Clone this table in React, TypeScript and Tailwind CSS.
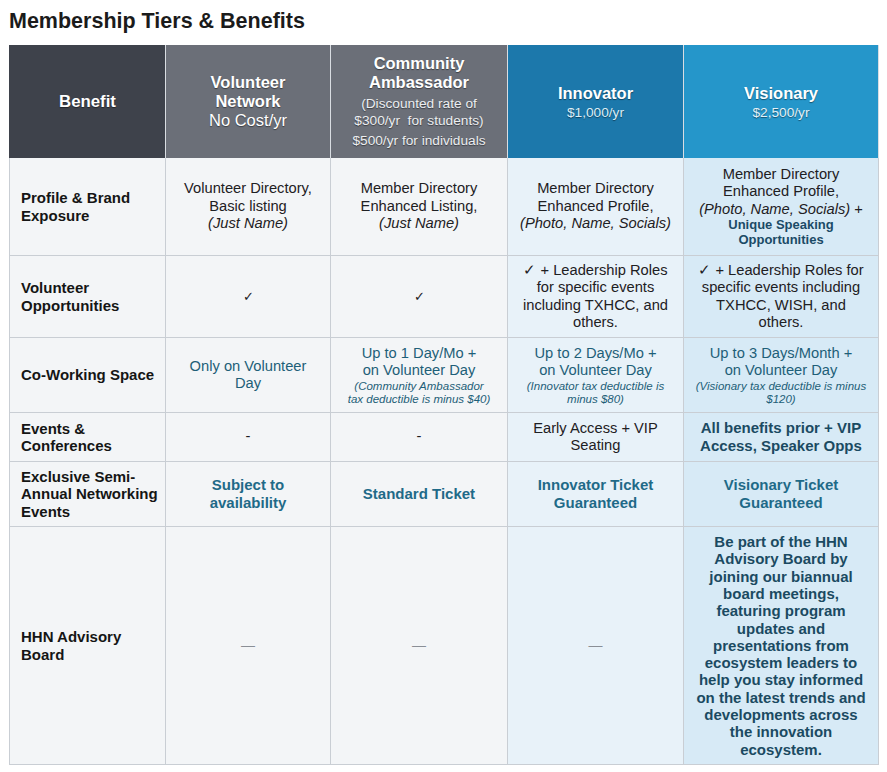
import React from 'react';

type Tone = 'gray' | 'inno' | 'vis';

const toneBg: Record<Tone, string> = {
  gray: 'bg-[#f3f5f7]',
  inno: 'bg-[#e8f2f9]',
  vis: 'bg-[#d7eaf6]',
};

function Label({ children }: { children: React.ReactNode }) {
  return (
    <div className="flex items-center whitespace-nowrap border-b border-l border-r border-[#c9ced4] bg-[#f3f5f7] pl-[11px] text-[15px] font-bold leading-[17.5px] text-[#151515]">
      <div>{children}</div>
    </div>
  );
}

function Cell({
  tone = 'gray',
  children,
}: {
  tone?: Tone;
  children: React.ReactNode;
}) {
  return (
    <div
      className={`flex items-center justify-center whitespace-nowrap border-b border-r border-[#c9ced4] px-1 text-center text-[14.7px] leading-[17.5px] text-[#1e2023] ${toneBg[tone]}`}
    >
      <div>{children}</div>
    </div>
  );
}

function Head({
  bg,
  children,
}: {
  bg: string;
  children: React.ReactNode;
}) {
  return (
    <div
      className={`flex items-center justify-center whitespace-nowrap border-r border-[#d9dde2] px-1 text-center text-white [text-shadow:0_1px_1px_rgba(0,0,0,0.45)] ${bg}`}
    >
      <div>{children}</div>
    </div>
  );
}

const Dash = () => <span className="text-[14px] text-[#8a8f96]">—</span>;

export default function App() {
  return (
    <div className="min-h-[772px] bg-white font-['Liberation_Sans',Arial,sans-serif]">
      <h1 className="pl-[9px] pt-[9px] text-[21.5px] font-bold leading-[25px] text-[#1b1b1b]">
        Membership Tiers &amp; Benefits
      </h1>

      <div className="ml-[9px] mt-[11px] grid w-[870px] grid-cols-[157px_165px_177px_176px_195px] grid-rows-[113px_98px_82px_75px_49px_65px_238px]">
        {/* header */}
        <Head bg="bg-[#3e424b] border-l border-l-[#3e424b]">
          <div className="text-[16.8px] font-bold">Benefit</div>
        </Head>
        <Head bg="bg-[#6b6f78]">
          <div className="text-[16.5px] leading-[19px]">
            <div className="font-bold">Volunteer</div>
            <div className="font-bold">Network</div>
            <div>No Cost/yr</div>
          </div>
        </Head>
        <Head bg="bg-[#6b6f78]">
          <div className="text-[16.5px] font-bold leading-[19px]">Community</div>
          <div className="text-[16.5px] font-bold leading-[19px]">Ambassador</div>
          <div className="mt-[3px] text-[13.7px] leading-[17px] text-[#eceef1]">
            (Discounted rate of
            <br />
            $300/yr&nbsp; for students)
          </div>
          <div className="mt-[3px] text-[13.7px] leading-[17px] text-[#eceef1]">
            $500/yr for individuals
          </div>
        </Head>
        <Head bg="bg-[#1c78ab]">
          <div className="text-[16.5px] font-bold leading-[20px]">Innovator</div>
          <div className="mt-[1px] text-[13.7px] leading-[17px] text-[#dbeef8]">
            $1,000/yr
          </div>
        </Head>
        <Head bg="bg-[#2596ca]">
          <div className="text-[16.5px] font-bold leading-[20px]">Visionary</div>
          <div className="mt-[1px] text-[13.7px] leading-[17px] text-[#e2f2fa]">
            $2,500/yr
          </div>
        </Head>

        {/* profile & brand */}
        <Label>
          Profile &amp; Brand
          <br />
          Exposure
        </Label>
        <Cell>
          Volunteer Directory,
          <br />
          Basic listing
          <br />
          <i>(Just Name)</i>
        </Cell>
        <Cell>
          Member Directory
          <br />
          Enhanced Listing,
          <br />
          <i>(Just Name)</i>
        </Cell>
        <Cell tone="inno">
          Member Directory
          <br />
          Enhanced Profile,
          <br />
          <i>(Photo, Name, Socials)</i>
        </Cell>
        <Cell tone="vis">
          Member Directory
          <br />
          Enhanced Profile,
          <br />
          <i>(Photo, Name, Socials)</i> +
          <div className="text-[13px] font-bold leading-[14.5px] text-[#1b4a66]">
            Unique Speaking
            <br />
            Opportunities
          </div>
        </Cell>

        {/* volunteer opportunities */}
        <Label>
          Volunteer
          <br />
          Opportunities
        </Label>
        <Cell>
          <span className="text-[13px]">✓</span>
        </Cell>
        <Cell>
          <span className="text-[13px]">✓</span>
        </Cell>
        <Cell tone="inno">
          ✓ + Leadership Roles
          <br />
          for specific events
          <br />
          including TXHCC, and
          <br />
          others.
        </Cell>
        <Cell tone="vis">
          ✓ + Leadership Roles for
          <br />
          specific events including
          <br />
          TXHCC, WISH, and
          <br />
          others.
        </Cell>

        {/* co-working */}
        <Label>Co-Working Space</Label>
        <Cell>
          <span className="text-[#1e5f78]">
            Only on Volunteer
            <br />
            Day
          </span>
        </Cell>
        <Cell>
          <div className="text-[#1e5f78]">
            Up to 1 Day/Mo +
            <br />
            on Volunteer Day
            <div className="text-[11.5px] italic leading-[13px]">
              (Community Ambassador
              <br />
              tax deductible is minus $40)
            </div>
          </div>
        </Cell>
        <Cell tone="inno">
          <div className="text-[#1e5f78]">
            Up to 2 Days/Mo +
            <br />
            on Volunteer Day
            <div className="text-[11.5px] italic leading-[13px]">
              (Innovator tax deductible is
              <br />
              minus $80)
            </div>
          </div>
        </Cell>
        <Cell tone="vis">
          <div className="text-[#1e5f78]">
            Up to 3 Days/Month +
            <br />
            on Volunteer Day
            <div className="text-[11.5px] italic leading-[13px]">
              (Visionary tax deductible is minus
              <br />
              $120)
            </div>
          </div>
        </Cell>

        {/* events */}
        <Label>
          Events &amp;
          <br />
          Conferences
        </Label>
        <Cell>-</Cell>
        <Cell>-</Cell>
        <Cell tone="inno">
          Early Access + VIP
          <br />
          Seating
        </Cell>
        <Cell tone="vis">
          <span className="text-[15px] font-bold text-[#1b4a62]">
            All benefits prior + VIP
            <br />
            Access, Speaker Opps
          </span>
        </Cell>

        {/* networking events */}
        <Label>
          Exclusive Semi-
          <br />
          Annual Networking
          <br />
          Events
        </Label>
        <Cell>
          <span className="text-[15px] font-bold text-[#1f6a88]">
            Subject to
            <br />
            availability
          </span>
        </Cell>
        <Cell>
          <span className="text-[15px] font-bold text-[#1f6a88]">
            Standard Ticket
          </span>
        </Cell>
        <Cell tone="inno">
          <span className="text-[15px] font-bold text-[#1f6a88]">
            Innovator Ticket
            <br />
            Guaranteed
          </span>
        </Cell>
        <Cell tone="vis">
          <span className="text-[15px] font-bold text-[#1f6a88]">
            Visionary Ticket
            <br />
            Guaranteed
          </span>
        </Cell>

        {/* advisory board */}
        <Label>
          HHN Advisory
          <br />
          Board
        </Label>
        <Cell>
          <Dash />
        </Cell>
        <Cell>
          <Dash />
        </Cell>
        <Cell tone="inno">
          <Dash />
        </Cell>
        <Cell tone="vis">
          <div className="text-[15px] font-bold leading-[17.3px] text-[#1b4a62]">
            Be part of the HHN
            <br />
            Advisory Board by
            <br />
            joining our biannual
            <br />
            board meetings,
            <br />
            featuring program
            <br />
            updates and
            <br />
            presentations from
            <br />
            ecosystem leaders to
            <br />
            help you stay informed
            <br />
            on the latest trends and
            <br />
            developments across
            <br />
            the innovation
            <br />
            ecosystem.
          </div>
        </Cell>
      </div>
    </div>
  );
}
